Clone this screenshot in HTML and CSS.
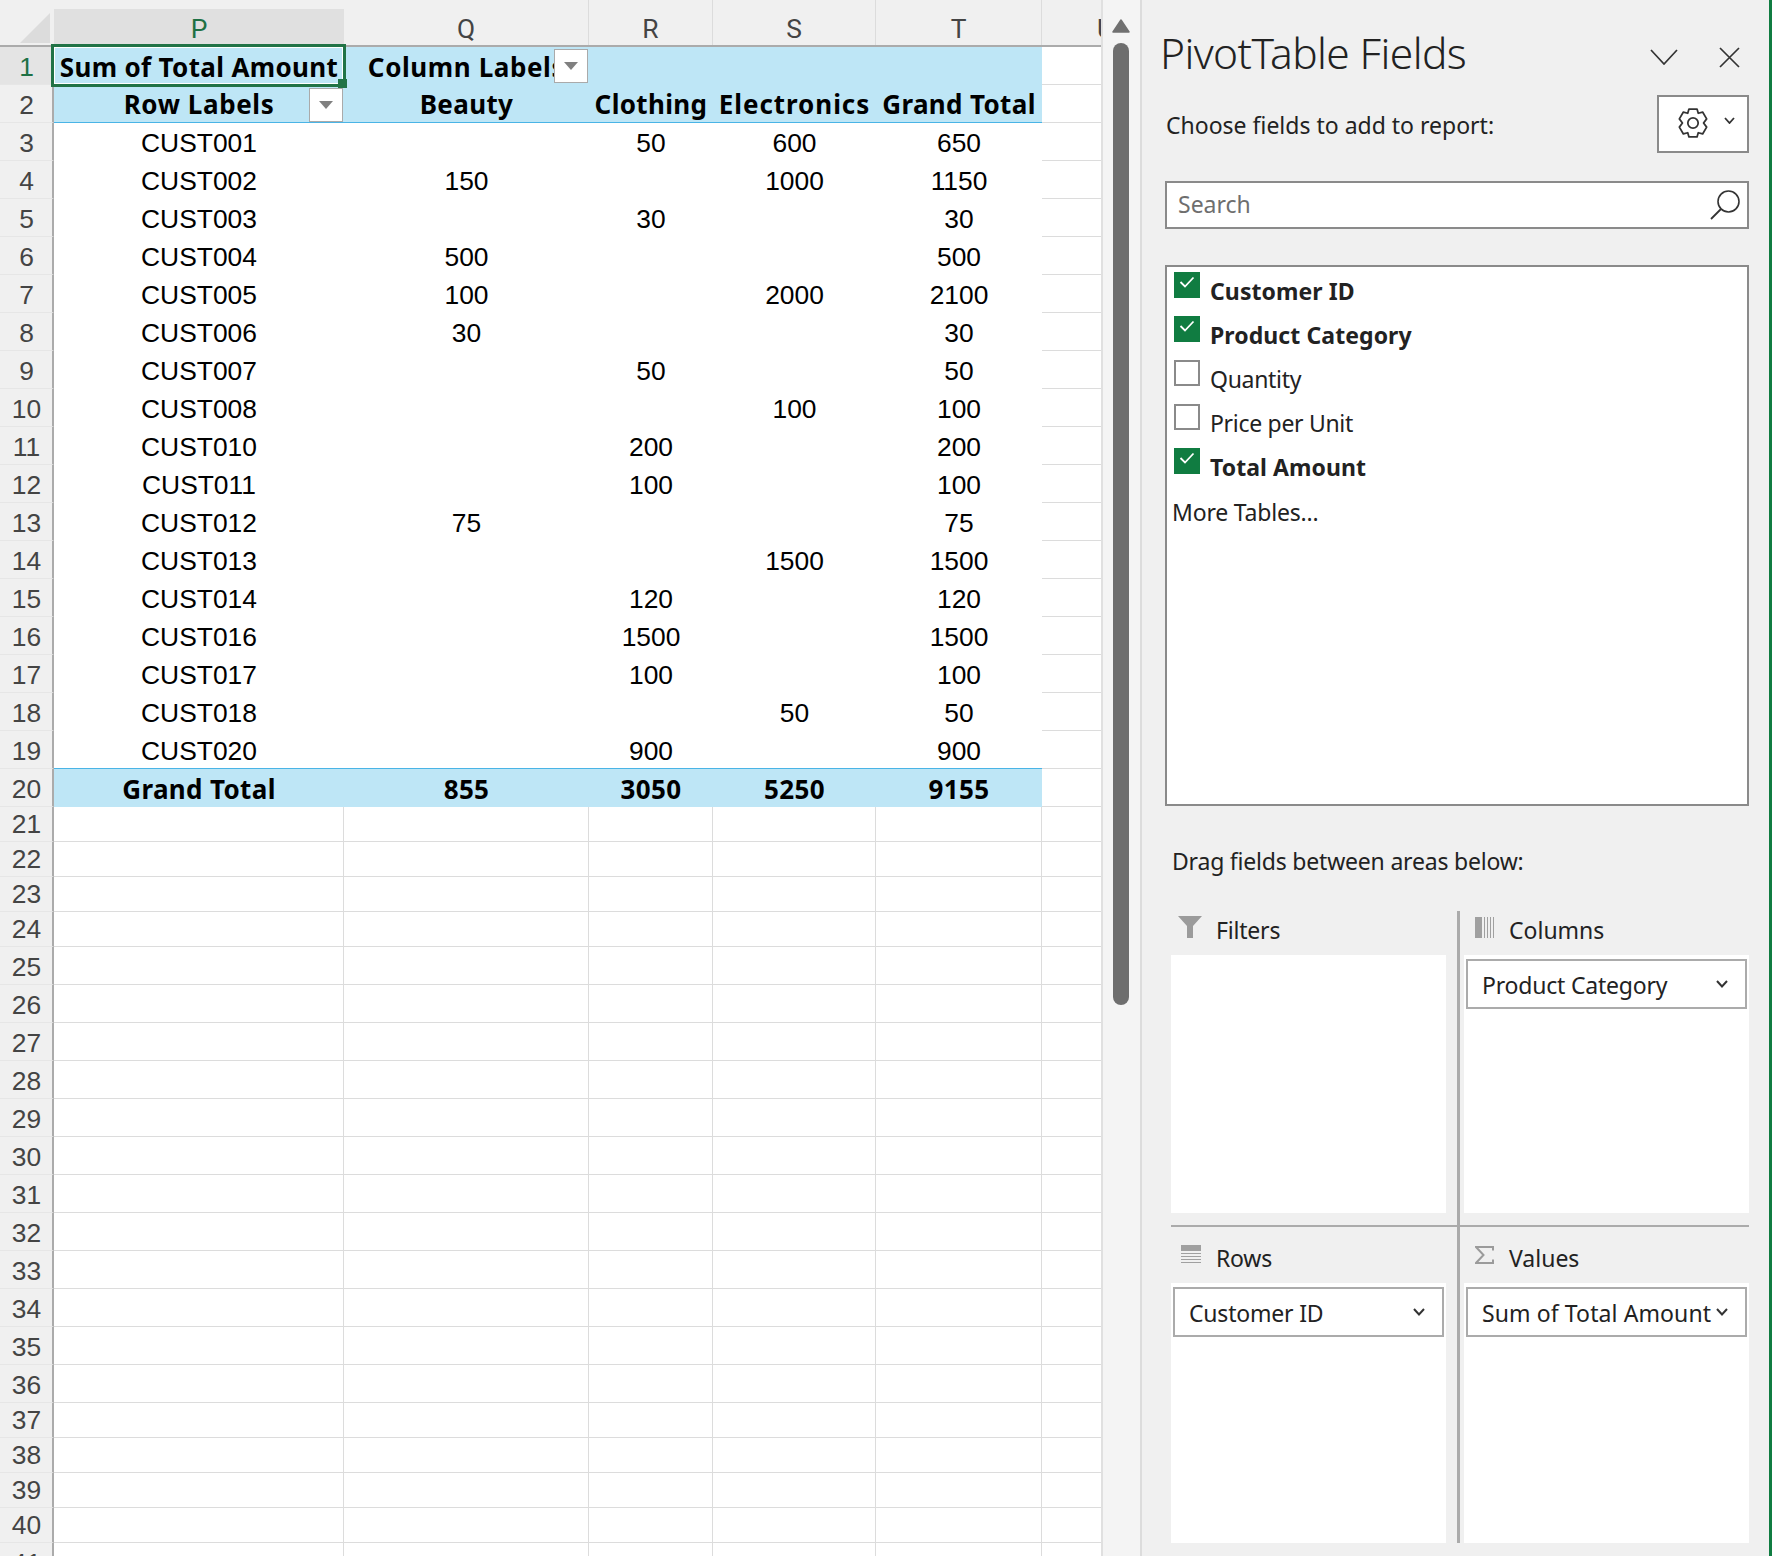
FILE: index.html
```html
<!DOCTYPE html>
<html lang="en">
<head>
<meta charset="utf-8">
<title>PivotTable Fields</title>
<link rel="stylesheet" href="styles.css">
</head>
<body>
<div class="app">
  <main class="sheet">
    <div class="col-head">
      <div class="corner"><span class="corner-tri"></span></div>
      <div class="ch ch-p"><span class="ch-label ch-sel">P</span></div>
      <div class="ch"><span class="ch-label">Q</span></div>
      <div class="ch"><span class="ch-label">R</span></div>
      <div class="ch"><span class="ch-label">S</span></div>
      <div class="ch"><span class="ch-label">T</span></div>
      <div class="ch ch-u"><span class="ch-label">U</span></div>
    </div>

    <div class="row"><div class="rh rh-sel">1</div><div class="c blue b sel-cell">Sum of Total Amount<span class="selection"></span><span class="handle"></span></div><div class="c blue b q-head wide"><span class="clip">Column Labels</span><button class="fbtn fbtn-col" aria-label="Filter"><i class="tri"></i></button></div><div class="c blue"></div><div class="c blue"></div><div class="c blue"></div><div class="u"></div></div>
    <div class="row"><div class="rh">2</div><div class="c blue b line wide">Row Labels<button class="fbtn fbtn-row" aria-label="Filter"><i class="tri"></i></button></div><div class="c blue b line">Beauty</div><div class="c blue b line">Clothing</div><div class="c blue b line wider">Electronics</div><div class="c blue b line">Grand Total</div><div class="u"></div></div>
    <div class="row"><div class="rh">3</div><div class="c">CUST001</div><div class="c"></div><div class="c">50</div><div class="c">600</div><div class="c">650</div><div class="u"></div></div>
    <div class="row"><div class="rh">4</div><div class="c">CUST002</div><div class="c">150</div><div class="c"></div><div class="c">1000</div><div class="c">1150</div><div class="u"></div></div>
    <div class="row"><div class="rh">5</div><div class="c">CUST003</div><div class="c"></div><div class="c">30</div><div class="c"></div><div class="c">30</div><div class="u"></div></div>
    <div class="row"><div class="rh">6</div><div class="c">CUST004</div><div class="c">500</div><div class="c"></div><div class="c"></div><div class="c">500</div><div class="u"></div></div>
    <div class="row"><div class="rh">7</div><div class="c">CUST005</div><div class="c">100</div><div class="c"></div><div class="c">2000</div><div class="c">2100</div><div class="u"></div></div>
    <div class="row"><div class="rh">8</div><div class="c">CUST006</div><div class="c">30</div><div class="c"></div><div class="c"></div><div class="c">30</div><div class="u"></div></div>
    <div class="row"><div class="rh">9</div><div class="c">CUST007</div><div class="c"></div><div class="c">50</div><div class="c"></div><div class="c">50</div><div class="u"></div></div>
    <div class="row"><div class="rh">10</div><div class="c">CUST008</div><div class="c"></div><div class="c"></div><div class="c">100</div><div class="c">100</div><div class="u"></div></div>
    <div class="row"><div class="rh">11</div><div class="c">CUST010</div><div class="c"></div><div class="c">200</div><div class="c"></div><div class="c">200</div><div class="u"></div></div>
    <div class="row"><div class="rh">12</div><div class="c">CUST011</div><div class="c"></div><div class="c">100</div><div class="c"></div><div class="c">100</div><div class="u"></div></div>
    <div class="row"><div class="rh">13</div><div class="c">CUST012</div><div class="c">75</div><div class="c"></div><div class="c"></div><div class="c">75</div><div class="u"></div></div>
    <div class="row"><div class="rh">14</div><div class="c">CUST013</div><div class="c"></div><div class="c"></div><div class="c">1500</div><div class="c">1500</div><div class="u"></div></div>
    <div class="row"><div class="rh">15</div><div class="c">CUST014</div><div class="c"></div><div class="c">120</div><div class="c"></div><div class="c">120</div><div class="u"></div></div>
    <div class="row"><div class="rh">16</div><div class="c">CUST016</div><div class="c"></div><div class="c">1500</div><div class="c"></div><div class="c">1500</div><div class="u"></div></div>
    <div class="row"><div class="rh">17</div><div class="c">CUST017</div><div class="c"></div><div class="c">100</div><div class="c"></div><div class="c">100</div><div class="u"></div></div>
    <div class="row"><div class="rh">18</div><div class="c">CUST018</div><div class="c"></div><div class="c"></div><div class="c">50</div><div class="c">50</div><div class="u"></div></div>
    <div class="row"><div class="rh">19</div><div class="c line">CUST020</div><div class="c line"></div><div class="c line">900</div><div class="c line"></div><div class="c line">900</div><div class="u"></div></div>
    <div class="row"><div class="rh">20</div><div class="c blue b">Grand Total</div><div class="c blue b">855</div><div class="c blue b">3050</div><div class="c blue b">5250</div><div class="c blue b">9155</div><div class="u"></div></div>

    <div class="row short"><div class="rh">21</div><div class="e"></div><div class="e"></div><div class="e"></div><div class="e"></div><div class="e"></div><div class="u"></div></div>
    <div class="row short"><div class="rh">22</div><div class="e"></div><div class="e"></div><div class="e"></div><div class="e"></div><div class="e"></div><div class="u"></div></div>
    <div class="row short"><div class="rh">23</div><div class="e"></div><div class="e"></div><div class="e"></div><div class="e"></div><div class="e"></div><div class="u"></div></div>
    <div class="row short"><div class="rh">24</div><div class="e"></div><div class="e"></div><div class="e"></div><div class="e"></div><div class="e"></div><div class="u"></div></div>
    <div class="row"><div class="rh">25</div><div class="e"></div><div class="e"></div><div class="e"></div><div class="e"></div><div class="e"></div><div class="u"></div></div>
    <div class="row"><div class="rh">26</div><div class="e"></div><div class="e"></div><div class="e"></div><div class="e"></div><div class="e"></div><div class="u"></div></div>
    <div class="row"><div class="rh">27</div><div class="e"></div><div class="e"></div><div class="e"></div><div class="e"></div><div class="e"></div><div class="u"></div></div>
    <div class="row"><div class="rh">28</div><div class="e"></div><div class="e"></div><div class="e"></div><div class="e"></div><div class="e"></div><div class="u"></div></div>
    <div class="row"><div class="rh">29</div><div class="e"></div><div class="e"></div><div class="e"></div><div class="e"></div><div class="e"></div><div class="u"></div></div>
    <div class="row"><div class="rh">30</div><div class="e"></div><div class="e"></div><div class="e"></div><div class="e"></div><div class="e"></div><div class="u"></div></div>
    <div class="row"><div class="rh">31</div><div class="e"></div><div class="e"></div><div class="e"></div><div class="e"></div><div class="e"></div><div class="u"></div></div>
    <div class="row"><div class="rh">32</div><div class="e"></div><div class="e"></div><div class="e"></div><div class="e"></div><div class="e"></div><div class="u"></div></div>
    <div class="row"><div class="rh">33</div><div class="e"></div><div class="e"></div><div class="e"></div><div class="e"></div><div class="e"></div><div class="u"></div></div>
    <div class="row"><div class="rh">34</div><div class="e"></div><div class="e"></div><div class="e"></div><div class="e"></div><div class="e"></div><div class="u"></div></div>
    <div class="row"><div class="rh">35</div><div class="e"></div><div class="e"></div><div class="e"></div><div class="e"></div><div class="e"></div><div class="u"></div></div>
    <div class="row"><div class="rh">36</div><div class="e"></div><div class="e"></div><div class="e"></div><div class="e"></div><div class="e"></div><div class="u"></div></div>
    <div class="row short"><div class="rh">37</div><div class="e"></div><div class="e"></div><div class="e"></div><div class="e"></div><div class="e"></div><div class="u"></div></div>
    <div class="row short"><div class="rh">38</div><div class="e"></div><div class="e"></div><div class="e"></div><div class="e"></div><div class="e"></div><div class="u"></div></div>
    <div class="row short"><div class="rh">39</div><div class="e"></div><div class="e"></div><div class="e"></div><div class="e"></div><div class="e"></div><div class="u"></div></div>
    <div class="row short"><div class="rh">40</div><div class="e"></div><div class="e"></div><div class="e"></div><div class="e"></div><div class="e"></div><div class="u"></div></div>
    <div class="row"><div class="rh">41</div><div class="e"></div><div class="e"></div><div class="e"></div><div class="e"></div><div class="e"></div><div class="u"></div></div>
  </main>

  <div class="vscroll">
    <svg class="vs-arrow" width="18" height="14" viewBox="0 0 18 14"><path d="M9 1 L17 13 H1 Z" fill="#707070" stroke="#707070" stroke-width="1.5" stroke-linejoin="round"/></svg>
    <div class="vs-thumb"></div>
  </div>

  <aside class="panel">
    <header class="p-head">
      <h1 class="p-title">PivotTable Fields</h1>
      <svg class="ic-chev" width="28" height="16" viewBox="0 0 28 16"><path d="M1 1 L14 15 L27 1" fill="none" stroke="#333" stroke-width="1.7"/></svg>
      <svg class="ic-x" width="21" height="21" viewBox="0 0 21 21"><path d="M1 1 L20 20 M20 1 L1 20" fill="none" stroke="#333" stroke-width="1.7"/></svg>
    </header>

    <div class="p-choose">
      <span class="choose-text">Choose fields to add to report:</span>
      <div class="gear-btn">
        <svg width="32" height="30" viewBox="2.5 0.5 28 29"><path d="M12.6 1.5 H20.4 L21.6 5.6 L25.8 4.4 L29.7 11.0 L26.7 15 L29.7 19.0 L25.8 25.6 L21.6 24.4 L20.4 28.5 H12.6 L11.4 24.4 L7.2 25.6 L3.3 19.0 L6.3 15 L3.3 11.0 L7.2 4.4 L11.4 5.6 Z" fill="none" stroke="#333" stroke-width="1.7" stroke-linejoin="round"/><circle cx="16.5" cy="15" r="5" fill="none" stroke="#333" stroke-width="1.7"/></svg>
        <svg class="gear-chev" width="11" height="7" viewBox="0 0 11 7"><path d="M1 1 L5.5 6 L10 1" fill="none" stroke="#333" stroke-width="1.8"/></svg>
      </div>
    </div>

    <div class="p-search">
      <span class="search-text">Search</span>
      <svg width="31" height="30" viewBox="0 0 31 30"><circle cx="18.5" cy="11.5" r="10.5" fill="none" stroke="#333" stroke-width="1.6"/><path d="M11 19 L1 29" fill="none" stroke="#333" stroke-width="1.8"/></svg>
    </div>

    <div class="p-list">
      <div class="f-row on"><span class="cb"><svg width="16" height="12" viewBox="0 0 16 12"><path d="M1.5 6 L6 10.5 L14.5 1.5" fill="none" stroke="#fff" stroke-width="1.8"/></svg></span><span class="f-name">Customer ID</span></div>
      <div class="f-row on"><span class="cb"><svg width="16" height="12" viewBox="0 0 16 12"><path d="M1.5 6 L6 10.5 L14.5 1.5" fill="none" stroke="#fff" stroke-width="1.8"/></svg></span><span class="f-name">Product Category</span></div>
      <div class="f-row"><span class="cb"></span><span class="f-name">Quantity</span></div>
      <div class="f-row"><span class="cb"></span><span class="f-name">Price per Unit</span></div>
      <div class="f-row on"><span class="cb"><svg width="16" height="12" viewBox="0 0 16 12"><path d="M1.5 6 L6 10.5 L14.5 1.5" fill="none" stroke="#fff" stroke-width="1.8"/></svg></span><span class="f-name">Total Amount</span></div>
      <div class="more">More Tables...</div>
    </div>

    <div class="drag-label">Drag fields between areas below:</div>

    <div class="areas">
      <section class="area a-left a-top">
        <div class="a-head"><svg class="a-ic" width="24" height="22" viewBox="0 0 24 22"><path d="M0 0 H24 L15 10 V22 H9 V10 Z" fill="#9b9b9b"/></svg><span>Filters</span></div>
        <div class="a-box"></div>
      </section>
      <section class="area a-right a-top">
        <div class="a-head"><svg class="a-ic" width="19" height="21" viewBox="0 0 19 21"><path d="M0 0 H7 V21 H0 Z M9 0 H10 V21 H9 Z M12 0 H13 V21 H12 Z M15 0 H16 V21 H15 Z M18 0 H19 V21 H18 Z" fill="#a0a0a0"/></svg><span>Columns</span></div>
        <div class="a-box"><div class="chip"><span>Product Category</span><svg width="12" height="8" viewBox="0 0 12 8"><path d="M1 1 L6 6.5 L11 1" fill="none" stroke="#333" stroke-width="2"/></svg></div></div>
      </section>
      <section class="area a-left a-bottom">
        <div class="a-head"><svg class="a-ic" width="20" height="18" viewBox="0 0 20 18"><path d="M0 0 H20 V6 H0 Z M0 8 H20 V9 H0 Z M0 11 H20 V12 H0 Z M0 14 H20 V15 H0 Z M0 17 H20 V18 H0 Z" fill="#a0a0a0"/></svg><span>Rows</span></div>
        <div class="a-box"><div class="chip"><span>Customer ID</span><svg width="12" height="8" viewBox="0 0 12 8"><path d="M1 1 L6 6.5 L11 1" fill="none" stroke="#333" stroke-width="2"/></svg></div></div>
      </section>
      <section class="area a-right a-bottom">
        <div class="a-head"><svg class="a-ic" width="19" height="18" viewBox="0 0 19 18"><path d="M18 4.5 V1 H1 L8.5 9 L1 17 H18 V13.5" fill="none" stroke="#9b9b9b" stroke-width="2"/></svg><span>Values</span></div>
        <div class="a-box"><div class="chip"><span class="chip-wide">Sum of Total Amount</span><svg width="12" height="8" viewBox="0 0 12 8"><path d="M1 1 L6 6.5 L11 1" fill="none" stroke="#333" stroke-width="2"/></svg></div></div>
      </section>
    </div>
  </aside>
</div>
</body>
</html>
```
FILE: styles.css
```css
* { box-sizing: border-box; }
html, body { margin: 0; padding: 0; }
body { width: 1772px; height: 1556px; overflow: hidden; background: #f0f0f0; }
.app { display: flex; width: 1772px; height: 1556px; overflow: hidden; }

/* ---------- sheet ---------- */
.sheet {
  width: 1101px; height: 1556px; flex: none; overflow: hidden;
  font-family: "Liberation Sans", Arial, sans-serif; font-size: 26.4px; color: #000;
}
.col-head, .row {
  display: grid;
  grid-template-columns: 54px 290px 245px 124px 163px 166px 59px;
}
.col-head { height: 47px; border-bottom: 2px solid #ababab; background: #f0f0f0; }
.corner { position: relative; }
.corner-tri {
  position: absolute; left: 20px; top: 13px; width: 30px; height: 30px;
  background: #dcdcdc; clip-path: polygon(100% 0, 100% 100%, 0 100%);
}
.ch {
  display: flex; align-items: flex-end; justify-content: center;
  border-right: 1px solid #dcdcdc; padding-bottom: 1px;
  font-family: Roboto, "Liberation Sans", sans-serif; color: #444;
}
.ch-p { background: #e0e0e0; margin-top: 9px; border-right: 0; }
.ch-sel { color: #1e7145; }
.ch-label { line-height: 30px; }
.ch-u { border-right: 0; justify-content: flex-start; padding-left: 55px; overflow: hidden; }

.row { height: 38px; background: #fff; }
.row.short { height: 35px; }
.rh {
  display: flex; align-items: center; justify-content: center;
  padding-top: 3px; padding-left: 1px;
  background: #f0f0f0; color: #444; border-right: 2px solid #ababab; border-bottom: 1px solid #e6e6e6;
}
.row.short .rh { padding-top: 0; }
.rh-sel { background: #e4e4e4; color: #1e7145; }
.c {
  position: relative; display: flex; align-items: center; justify-content: center;
  padding-top: 3px; white-space: nowrap; min-width: 0;
}
.blue { background: #bee6f6; }
.b { font-family: "Noto Sans", sans-serif; font-weight: 700; font-size: 26px; letter-spacing: 0.35px; padding-top: 1px; }
.wide { letter-spacing: 0.6px; }
.wider { letter-spacing: 0.95px; }
.line { border-bottom: 1px solid #4ab4e6; }
.e { border-right: 1px solid #dcdcdc; border-bottom: 1px solid #dcdcdc; }
.u { border-bottom: 1px solid #dcdcdc; }
.q-head { overflow: hidden; }
.clip { display: block; }

.selection {
  position: absolute; left: -3px; top: -3px; right: -2px; bottom: -2px;
  border: 3px solid #217346; box-shadow: inset 0 0 0 1px #fff; z-index: 3;
}
.handle {
  position: absolute; right: -3px; bottom: -3px; width: 9px; height: 9px;
  background: #217346; z-index: 4;
}
.fbtn {
  position: absolute; padding: 0; display: flex; align-items: center; justify-content: center;
  width: 34px; height: 34px; background: #fff; border: 1px solid #aaa;
}
.fbtn-col { right: 1px; top: 2px; }
.fbtn-row { right: 1px; top: 3px; }
.tri { width: 0; height: 0; border-left: 7px solid transparent; border-right: 7px solid transparent; border-top: 8px solid #808080; }

/* ---------- scrollbar ---------- */
.vscroll {
  width: 39px; flex: none; background: #f4f4f4; border-left: 2px solid #e0e0e0;
  display: flex; flex-direction: column; align-items: center;
  padding-top: 19px;
}
.vs-arrow { margin-bottom: 10px; margin-right: 1px; }
.vs-thumb { width: 16px; height: 962px; background: #6e6e6e; border-radius: 8px; margin-right: 1px; }

/* ---------- panel ---------- */
.panel {
  width: 632px; flex: none; height: 1556px; background: #f0f0f0;
  border-left: 2px solid #dcdcdc; border-right: 3px solid #107c41;
  padding: 0 20px 0 23px;
  font-family: "Noto Sans", sans-serif; font-size: 23px; color: #222;
}
.p-head { height: 95px; display: flex; position: relative; }
.p-title { margin: 25px 0 0 -5px; font-weight: 300; font-size: 42.5px; line-height: 56px; letter-spacing: -0.6px; flex: 1; color: #222; white-space: nowrap; }
.ic-chev { margin-top: 49px; margin-right: 41px; }
.ic-x { margin-top: 47px; margin-right: 9px; }
.p-choose { height: 58px; display: flex; align-items: center; justify-content: space-between; }
.choose-text { padding-left: 1px; padding-top: 2px; }
.gear-btn {
  width: 92px; height: 58px; background: #fff; border: 2px solid #8a8a8a;
  display: flex; align-items: center; padding-left: 18px; padding-bottom: 2px;
}
.gear-chev { margin-left: 15px; margin-bottom: 6px; }
.p-search {
  margin-top: 28px; height: 48px; background: #fff; border: 2px solid #8a8a8a;
  display: flex; align-items: center; justify-content: space-between; padding: 0 6px 0 11px;
}
.search-text { color: #6e6e6e; padding-bottom: 2px; }
.p-list {
  margin-top: 36px; height: 541px; background: #fff; border: 2px solid #8a8a8a;
  padding: 5px 0 0 7px;
}
.f-row { height: 44px; display: flex; position: relative; }
.cb {
  width: 26px; height: 26px; flex: none; border: 2px solid #8a8a8a; background: #fff;
  display: flex; align-items: center; justify-content: center;
}
.f-row.on .cb { background: #107c41; border-color: #107c41; padding-bottom: 6px; }
.f-name { margin-left: 10px; margin-top: 3px; line-height: 32px; white-space: nowrap; letter-spacing: -0.3px; }
.f-row.on .f-name { font-weight: 700; letter-spacing: 0.08px; }
.more { margin-left: -2px; margin-top: 4px; line-height: 32px; letter-spacing: -0.2px; }

.drag-label { margin: 39px 0 0 7px; height: 66px; line-height: 32px; letter-spacing: -0.2px; }
.areas {
  margin-left: 6px; width: 578px;
  display: grid; grid-template-columns: 289px 289px; grid-template-rows: 316px 316px;
}
.area { display: flex; flex-direction: column; min-width: 0; }
.a-left { padding-right: 11px; border-right: 3px solid #ababab; }
.a-right { padding-left: 4px; }
.a-top { border-bottom: 2px solid #ababab; padding-bottom: 12px; }
.a-head { display: flex; flex: none; position: relative; }
.a-top .a-head { height: 44px; padding-top: 3px; }
.a-bottom .a-head { height: 56px; padding-top: 15px; }
.a-ic { position: absolute; }
.a-left .a-ic { left: 7px; top: 5px; }
.a-right .a-ic { left: 11px; top: 6px; }
.a-bottom.a-left .a-ic { left: 10px; top: 18px; }
.a-bottom.a-right .a-ic { left: 11px; top: 19px; }
.a-left .a-head span { margin-left: 45px; line-height: 32px; letter-spacing: -0.2px; }
.a-right .a-head span { margin-left: 45px; line-height: 32px; }
.a-box { flex: 1; background: #fff; padding: 4px 2px; }
.chip {
  height: 50px; border: 2px solid #ababab; background: #fff;
  display: flex; align-items: center; justify-content: space-between;
  padding: 2px 17px 0 14px; white-space: nowrap; letter-spacing: -0.2px;
}
.chip-wide { letter-spacing: 0.1px; }
.chip svg { flex: none; margin-bottom: 2px; }
```
